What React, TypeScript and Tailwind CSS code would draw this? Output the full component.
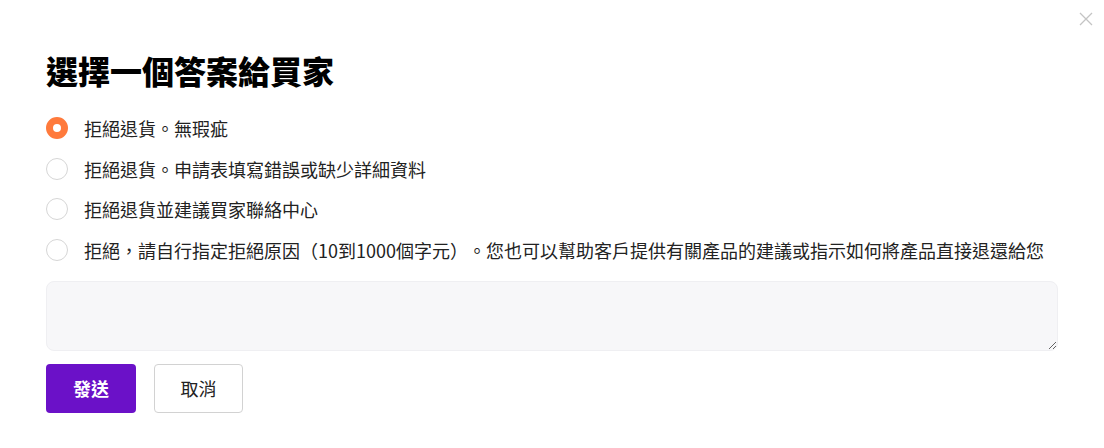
import React from 'react'

const options = [
  '拒絕退貨。無瑕疵',
  '拒絕退貨。申請表填寫錯誤或缺少詳細資料',
  '拒絕退貨並建議買家聯絡中心',
  '拒絕，請自行指定拒絕原因（10到1000個字元）。您也可以幫助客戶提供有關產品的建議或指示如何將產品直接退還給您',
]

export default function App() {
  const [selected, setSelected] = React.useState(0)
  const [reason, setReason] = React.useState('')

  return (
    <div
      className="relative h-[448px] w-[1104px] bg-white text-[#222] [text-spacing-trim:space-all]"
      style={{ fontFamily: '"Noto Sans CJK TC", "Noto Sans", sans-serif' }}
    >
      {/* close */}
      <button className="absolute right-[11px] top-[12px] flex h-[14px] w-[14px] items-center justify-center text-[#c4c4c4]">
        <svg width="14" height="14" viewBox="0 0 14 14" fill="none" stroke="currentColor" strokeWidth="1.3">
          <path d="M1 1l12 12M13 1L1 13" />
        </svg>
      </button>

      <div className="flex flex-col px-[46px] pt-[50px]">
        <h2 className="text-[32px] font-black leading-[40px] text-black">選擇一個答案給買家</h2>

        <div className="mt-[18px] flex flex-col">
          {options.map((label, i) => (
            <label
              key={i}
              className="flex h-[40.5px] cursor-pointer items-center gap-[16px]"
              onClick={() => setSelected(i)}
            >
              {selected === i ? (
                <span className="h-[22px] w-[22px] shrink-0 rounded-full border-[7px] border-[#ff7a3c] bg-white" />
              ) : (
                <span className="h-[22px] w-[22px] shrink-0 rounded-full border border-[#d6d6d6] bg-white" />
              )}
              <span className="whitespace-nowrap text-[18px] leading-[26px] text-[#222]">{label}</span>
            </label>
          ))}
        </div>

        <textarea
          value={reason}
          onChange={(e) => setReason(e.target.value)}
          className="mt-[11px] h-[70px] w-[1012px] rounded-[8px] border border-[#efeff2] bg-[#f7f7f9] px-3 py-2 text-[16px] outline-none"
        />

        <div className="mt-[13px] flex gap-[18px]">
          <button className="h-[49px] w-[90px] rounded-[4px] bg-[#6b11c8] text-[18px] font-bold text-white">發送</button>
          <button className="h-[49px] w-[89px] rounded-[4px] border border-[#d2d2d2] bg-white text-[18px] text-[#222]">取消</button>
        </div>
      </div>
    </div>
  )
}
